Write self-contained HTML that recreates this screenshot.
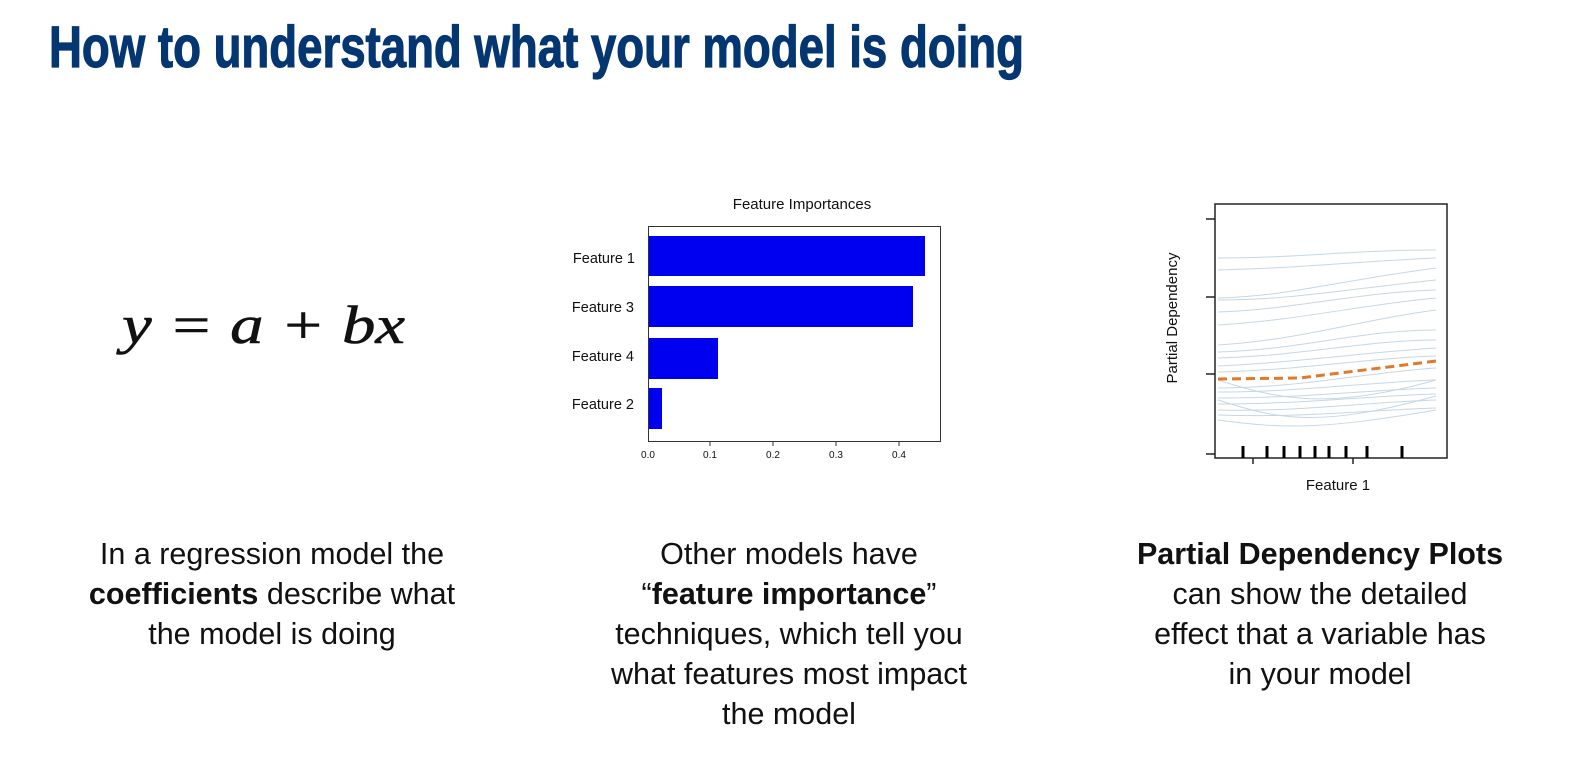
<!DOCTYPE html>
<html><head><meta charset="utf-8"><style>
html,body{margin:0;padding:0;background:#fff;width:1579px;height:765px;overflow:hidden;position:relative;font-family:"Liberation Sans",sans-serif}
.col{position:absolute;text-align:center;font-size:30.5px;line-height:40px;color:#111;width:560px}
.col b{font-weight:bold}
svg{position:absolute;left:0;top:0}
</style></head><body>
<svg width="1579" height="765" xmlns="http://www.w3.org/2000/svg">
<text x="49" y="67" font-family="Liberation Sans" font-weight="bold" font-size="58" fill="#043672" stroke="#043672" stroke-width="1.2" textLength="975" lengthAdjust="spacingAndGlyphs">How to understand what your model is doing</text>
<text x="122" y="343" font-family="Liberation Serif" font-style="italic" font-size="54" fill="#111" stroke="#111" stroke-width="0.6" textLength="283" lengthAdjust="spacingAndGlyphs">y = a + bx</text>

<!-- feature importance -->
<text x="802" y="209" font-size="15" text-anchor="middle" fill="#111" font-family="Liberation Sans">Feature Importances</text>
<rect x="648.5" y="226.5" width="292" height="215" fill="none" stroke="#333" stroke-width="1"/>
<rect x="649" y="236" width="276" height="40" fill="#0000f0"/>
<rect x="649" y="286" width="264" height="41" fill="#0000f0"/>
<rect x="649" y="338" width="69" height="41" fill="#0000f0"/>
<rect x="649" y="388" width="13" height="41" fill="#0000f0"/>
<g font-size="14.5" fill="#111" text-anchor="end" font-family="Liberation Sans">
<text x="635" y="263">Feature 1</text><text x="634" y="312">Feature 3</text><text x="634" y="361">Feature 4</text><text x="634" y="409">Feature 2</text></g>
<g font-size="10" fill="#111" text-anchor="middle" font-family="Liberation Sans">
<text x="648" y="458">0.0</text><text x="710" y="458">0.1</text><text x="773" y="458">0.2</text><text x="836" y="458">0.3</text><text x="899" y="458">0.4</text></g>
<g stroke="#333"><line x1="710" y1="442" x2="710" y2="446"/><line x1="773" y1="442" x2="773" y2="446"/><line x1="836" y1="442" x2="836" y2="446"/><line x1="899" y1="442" x2="899" y2="446"/></g>

<!-- PDP -->
<g fill="none" stroke="#9fbdd4" stroke-width="1" opacity="0.6">
<path d="M1218 258 C1300 258 1350 250 1436 250"/>
<path d="M1218 270 C1300 268 1350 262 1436 258"/>
<path d="M1218 298 C1290 296 1330 282 1436 268"/>
<path d="M1218 300 C1290 300 1340 290 1436 280"/>
<path d="M1218 312 C1290 310 1360 292 1436 290"/>
<path d="M1218 325 C1300 320 1360 305 1436 298"/>
<path d="M1218 345 C1300 340 1360 320 1436 310"/>
<path d="M1218 352 C1300 350 1360 330 1436 330"/>
<path d="M1218 358 C1300 356 1370 340 1436 340"/>
<path d="M1218 366 C1300 362 1370 352 1436 348"/>
<path d="M1218 372 C1300 370 1370 358 1436 356"/>
<path d="M1218 388 C1300 388 1370 372 1436 368"/>
<path d="M1218 392 C1300 392 1370 382 1436 380"/>
<path d="M1218 398 C1300 398 1370 390 1436 388"/>
<path d="M1218 404 C1300 404 1370 396 1436 394"/>
<path d="M1218 410 C1300 412 1370 402 1436 400"/>
<path d="M1218 415 C1300 418 1370 410 1436 408"/>
<path d="M1218 420 C1290 430 1330 428 1436 410"/>
<path d="M1218 400 C1280 420 1320 428 1436 396"/>
<path d="M1218 380 C1280 400 1330 410 1436 380"/>
</g>
<path d="M1218 379 L1300 378 L1436 361" fill="none" stroke="#e07a2a" stroke-width="3" stroke-dasharray="9 5"/>
<rect x="1215" y="204" width="232" height="254" fill="none" stroke="#222" stroke-width="1.5"/>
<g stroke="#222" stroke-width="1.5">
<line x1="1206" y1="219" x2="1215" y2="219"/><line x1="1206" y1="297" x2="1215" y2="297"/><line x1="1206" y1="374" x2="1215" y2="374"/><line x1="1206" y1="454" x2="1215" y2="454"/>
<line x1="1253" y1="458" x2="1253" y2="464"/><line x1="1353" y1="458" x2="1353" y2="464"/></g>
<g stroke="#000" stroke-width="3">
<line x1="1243" y1="446" x2="1243" y2="458"/><line x1="1267" y1="446" x2="1267" y2="458"/><line x1="1284" y1="446" x2="1284" y2="458"/><line x1="1300" y1="446" x2="1300" y2="458"/><line x1="1315" y1="446" x2="1315" y2="458"/><line x1="1329" y1="446" x2="1329" y2="458"/><line x1="1346" y1="446" x2="1346" y2="458"/><line x1="1367" y1="446" x2="1367" y2="458"/><line x1="1402" y1="446" x2="1402" y2="458"/></g>
<text x="1338" y="490" font-size="15" text-anchor="middle" fill="#111" font-family="Liberation Sans">Feature 1</text>
<text transform="translate(1177 318) rotate(-90)" font-size="15" text-anchor="middle" fill="#111" font-family="Liberation Sans">Partial Dependency</text>
</svg>
<div class="col" style="left:-8px;top:534px">In a regression model the<br><b>coefficients</b> describe what<br>the model is doing</div>
<div class="col" style="left:509px;top:534px">Other models have<br>“<b>feature importance</b>”<br>techniques, which tell you<br>what features most impact<br>the model</div>
<div class="col" style="left:1040px;top:534px"><b>Partial Dependency Plots</b><br>can show the detailed<br>effect that a variable has<br>in your model</div>
</body></html>
